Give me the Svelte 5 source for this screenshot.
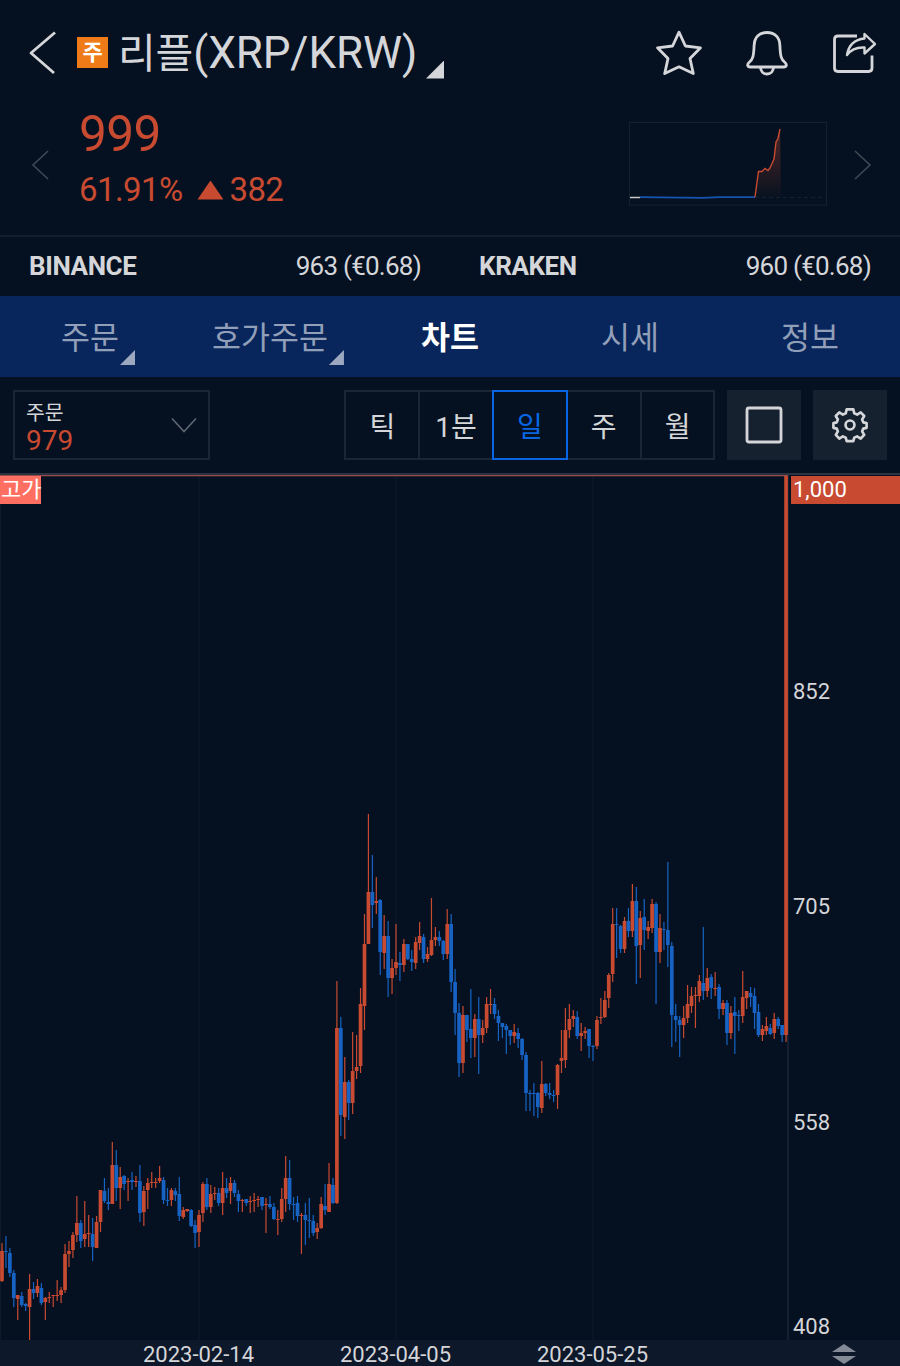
<script lang="ts">
	type Candle = [up: number, high: number, top: number, bottom: number, low: number];

	const exchanges = [
		{ name: 'BINANCE', price: '963 (€0.68)' },
		{ name: 'KRAKEN', price: '960 (€0.68)' }
	];

	const tabs = [
		{ label: '주문', menu: true },
		{ label: '호가주문', menu: true },
		{ label: '차트', menu: false },
		{ label: '시세', menu: false },
		{ label: '정보', menu: false }
	];

	const periods = ['틱', '1분', '일', '주', '월'];
	const dates = ['2023-02-14', '2023-04-05', '2023-05-25'];

	const prices = [
		{ label: '852', y: 699 },
		{ label: '705', y: 914 },
		{ label: '558', y: 1129.5 },
		{ label: '408', y: 1334 }
	];

	let tab = $state(2);
	let period = $state(2);

	const step = 3.94;

	// 1 = up (red), 0 = down (blue)
	const candles: Candle[] = [
		[1, 1243, 1251, 1281, 1282], [0, 1236, 1251, 1252, 1268], [0, 1248, 1253, 1273, 1277],
		[0, 1270, 1273, 1298, 1307], [1, 1295, 1295, 1299, 1320], [0, 1292, 1296, 1305, 1307],
		[0, 1303, 1304, 1306, 1311], [1, 1274, 1289, 1307, 1340], [0, 1282, 1289, 1293, 1299],
		[1, 1279, 1286, 1293, 1297], [0, 1283, 1288, 1303, 1305], [1, 1297, 1298, 1302, 1320],
		[1, 1292, 1297, 1298, 1303], [1, 1295, 1295, 1296, 1307], [1, 1280, 1295, 1296, 1301],
		[1, 1287, 1290, 1295, 1303], [1, 1244, 1254, 1290, 1293], [1, 1241, 1251, 1254, 1267],
		[1, 1232, 1235, 1250, 1258], [1, 1196, 1223, 1235, 1242], [0, 1220, 1223, 1241, 1248],
		[1, 1201, 1234, 1239, 1247], [1, 1215, 1233, 1234, 1247], [0, 1218, 1234, 1247, 1261],
		[1, 1216, 1222, 1248, 1248], [1, 1190, 1190, 1222, 1232], [0, 1178, 1191, 1201, 1203],
		[0, 1188, 1202, 1204, 1210], [1, 1142, 1165, 1204, 1204], [0, 1150, 1165, 1188, 1201],
		[1, 1167, 1177, 1188, 1209], [0, 1175, 1176, 1184, 1190], [1, 1178, 1181, 1182, 1201],
		[0, 1172, 1180, 1182, 1190], [1, 1176, 1181, 1182, 1187], [0, 1165, 1181, 1213, 1222],
		[1, 1186, 1191, 1212, 1226], [1, 1178, 1183, 1190, 1209], [1, 1172, 1182, 1183, 1188],
		[1, 1178, 1182, 1183, 1188], [1, 1166, 1178, 1181, 1183], [0, 1177, 1180, 1200, 1204],
		[0, 1188, 1200, 1201, 1206], [1, 1188, 1190, 1200, 1206], [0, 1188, 1191, 1195, 1201],
		[0, 1177, 1194, 1216, 1221], [1, 1207, 1210, 1217, 1219], [1, 1209, 1209, 1211, 1212],
		[0, 1209, 1210, 1226, 1227], [0, 1220, 1225, 1233, 1248], [1, 1210, 1215, 1232, 1247],
		[1, 1182, 1184, 1213, 1222], [0, 1178, 1184, 1207, 1210], [1, 1185, 1194, 1207, 1213],
		[1, 1187, 1193, 1194, 1200], [0, 1188, 1193, 1203, 1206], [1, 1172, 1188, 1203, 1215],
		[0, 1178, 1188, 1193, 1198], [1, 1177, 1183, 1191, 1204], [0, 1180, 1183, 1193, 1197],
		[0, 1190, 1194, 1201, 1212], [1, 1199, 1200, 1201, 1212], [0, 1199, 1199, 1203, 1206],
		[1, 1196, 1201, 1202, 1213], [1, 1193, 1200, 1201, 1212], [1, 1196, 1199, 1200, 1207],
		[0, 1197, 1197, 1206, 1210], [1, 1198, 1204, 1205, 1233], [0, 1196, 1204, 1207, 1209],
		[0, 1203, 1207, 1219, 1220], [1, 1210, 1219, 1220, 1235], [1, 1188, 1199, 1219, 1222],
		[1, 1156, 1178, 1199, 1212], [0, 1160, 1178, 1204, 1210], [0, 1197, 1204, 1205, 1220],
		[0, 1196, 1203, 1216, 1222], [1, 1213, 1215, 1216, 1254], [0, 1203, 1215, 1220, 1245],
		[0, 1198, 1220, 1221, 1238], [0, 1215, 1221, 1233, 1236], [1, 1223, 1228, 1232, 1239],
		[1, 1197, 1204, 1228, 1229], [0, 1184, 1206, 1210, 1215], [1, 1163, 1184, 1212, 1212],
		[0, 1178, 1185, 1203, 1204], [1, 981, 1028, 1203, 1204], [0, 1017, 1028, 1115, 1136],
		[1, 1057, 1082, 1117, 1139], [0, 1080, 1082, 1103, 1120], [1, 1032, 1071, 1103, 1114],
		[1, 1035, 1067, 1071, 1079], [1, 988, 1004, 1066, 1073], [1, 914, 944, 1006, 1030],
		[1, 814, 892, 944, 944], [0, 855, 892, 905, 928], [1, 877, 901, 903, 914],
		[0, 899, 900, 952, 975], [1, 915, 936, 953, 969], [0, 921, 936, 978, 997],
		[1, 959, 968, 978, 994], [1, 924, 962, 968, 975], [0, 952, 963, 965, 981],
		[1, 939, 944, 965, 972], [0, 944, 944, 959, 960], [0, 950, 959, 962, 971],
		[1, 937, 942, 963, 969], [1, 922, 936, 943, 950], [0, 934, 937, 959, 963],
		[1, 947, 954, 959, 962], [1, 898, 940, 955, 956], [1, 927, 937, 940, 946],
		[0, 931, 937, 941, 946], [0, 940, 941, 954, 960], [1, 909, 924, 954, 959],
		[0, 914, 924, 982, 992], [0, 969, 982, 1013, 1035], [0, 1003, 1013, 1063, 1077],
		[1, 1006, 1015, 1063, 1073], [0, 1015, 1015, 1030, 1042], [0, 989, 1029, 1038, 1058],
		[1, 1014, 1019, 1038, 1057], [0, 997, 1019, 1035, 1074], [1, 1020, 1028, 1035, 1043],
		[1, 997, 1004, 1028, 1033], [1, 989, 1004, 1005, 1014], [0, 998, 1004, 1014, 1019],
		[0, 1010, 1016, 1023, 1041], [0, 1023, 1023, 1027, 1038], [0, 1024, 1026, 1030, 1054],
		[0, 1030, 1030, 1036, 1045], [1, 1024, 1032, 1036, 1043], [0, 1028, 1033, 1039, 1048],
		[0, 1038, 1039, 1055, 1060], [0, 1052, 1055, 1093, 1111], [0, 1090, 1093, 1094, 1111],
		[0, 1083, 1093, 1094, 1116], [0, 1092, 1093, 1107, 1118], [1, 1061, 1084, 1108, 1113],
		[0, 1083, 1084, 1093, 1096], [0, 1083, 1093, 1095, 1099], [0, 1090, 1095, 1096, 1102],
		[1, 1064, 1065, 1095, 1109], [1, 1030, 1058, 1061, 1073], [1, 1008, 1030, 1060, 1068],
		[1, 1004, 1019, 1030, 1038], [1, 1010, 1016, 1019, 1027], [0, 1011, 1017, 1036, 1039],
		[1, 1023, 1033, 1036, 1051], [1, 1027, 1031, 1033, 1039], [0, 1029, 1029, 1046, 1058],
		[0, 1045, 1046, 1047, 1061], [1, 1016, 1020, 1046, 1049], [1, 998, 1017, 1018, 1024],
		[1, 991, 1000, 1017, 1018], [1, 973, 975, 998, 1008], [1, 908, 924, 974, 982],
		[0, 908, 924, 925, 958], [0, 925, 926, 949, 953], [1, 917, 921, 949, 953],
		[0, 908, 921, 931, 937], [1, 884, 901, 931, 937], [0, 887, 901, 946, 984],
		[1, 911, 918, 945, 978], [0, 899, 917, 930, 950], [1, 921, 927, 931, 939],
		[1, 899, 904, 928, 933], [0, 902, 904, 952, 1004], [1, 914, 928, 952, 963],
		[0, 922, 929, 930, 950], [0, 862, 930, 945, 967], [0, 942, 946, 1015, 1047],
		[0, 1004, 1016, 1020, 1042], [0, 1016, 1020, 1025, 1057], [1, 1006, 1018, 1025, 1038],
		[1, 985, 1004, 1018, 1023], [1, 987, 996, 1006, 1013], [1, 987, 995, 996, 1028],
		[1, 975, 981, 996, 1002], [0, 927, 983, 991, 1000], [1, 968, 978, 991, 997],
		[0, 974, 977, 988, 999], [1, 972, 988, 989, 996], [0, 984, 987, 1009, 1019],
		[1, 1000, 1003, 1009, 1015], [0, 1000, 1003, 1033, 1045], [1, 1006, 1013, 1033, 1039],
		[0, 997, 1012, 1016, 1054], [0, 1010, 1015, 1016, 1031], [1, 971, 997, 1016, 1023],
		[1, 991, 991, 998, 1009], [0, 987, 993, 997, 1007], [0, 988, 996, 1013, 1029],
		[0, 1004, 1012, 1035, 1037], [1, 1025, 1029, 1035, 1041], [1, 1017, 1026, 1031, 1035],
		[0, 1024, 1028, 1034, 1035], [1, 1013, 1019, 1033, 1039], [0, 1017, 1019, 1026, 1029],
		[0, 1025, 1025, 1035, 1042], [1, 476, 476, 1035, 1042]
	];
</script>

<div class="app">
	<header>
		<button class="back" aria-label="back">
			<svg width="30" height="46" viewBox="0 0 30 46">
				<path d="M27 2.5 3 23l23 20" />
			</svg>
		</button>
		<span class="badge">주</span>
		<h1><span>리플</span>(XRP/KRW)</h1>
		<i class="corner large"></i>
		<div class="actions">
			<svg width="48" height="48" viewBox="0 0 48 48">
				<path d="M24 3.200 30.400 17 45.500 18.800 35 29.500 38.300 44.600 24 37.800 9.700 44.600 13 29.500 2.500 18.800 17.600 17Z" />
			</svg>
			<svg width="44" height="48" viewBox="0 0 44 48">
				<path d="M22 3.500c-8 0-12.600 5-12.900 13C8.700 28 7.500 30.500 4.500 33c-3 2.500-2 5 .8 5h33.400c2.800 0 3.800-2.500.8-5-3-2.500-4.200-5-4.600-16.500C34.600 8.500 30 3.500 22 3.500Z" />
				<path d="M15.500 38c0 4 2.700 7 6.500 7s6.500-3 6.500-7" />
			</svg>
			<svg width="46" height="48" viewBox="0 0 46 48">
				<path d="M26 7H7Q3.500 7 3.500 10.500v28.500Q3.500 42.500 7 42.500h30.500q3.500 0 3.500-3.500V26.500" />
				<path class="thin" d="M16 26C17.500 17 23 10.500 33.500 9.500V5L44 15 33.500 24.500V18.500c-8-.5-13.500 2-17.500 7.500Z" />
			</svg>
		</div>
	</header>

	<section class="quote">
		<svg class="arrow" width="18" height="30" viewBox="0 0 18 30"><path d="M17 1 2 15l15 14" /></svg>
		<div class="price">
			<strong>999</strong>
			<div class="change">
				<span>61.91%</span>
				<i class="up"></i>
				<span>382</span>
			</div>
		</div>
		<svg class="spark" width="199" height="84" viewBox="0 0 199 84">
			<defs>
				<linearGradient id="glow" x1="0" y1="0" x2="0" y2="1">
					<stop offset="0" stop-color="#c84a31" stop-opacity=".38" />
					<stop offset="1" stop-color="#c84a31" stop-opacity=".02" />
				</linearGradient>
			</defs>
			<rect x=".5" y=".5" width="197" height="82.500" fill="none" stroke="#16212f" />
			<path d="M126 75.500H197" stroke="#16212f" stroke-dasharray="4 3" />
			<path d="M126 75 130 50 134 49 140 47 144 41 145 35 147 20 151 7 152 75Z" fill="url(#glow)" />
			<path d="M1 75.500H11" stroke="#c8c8c8" stroke-width="1.500" />
			<path d="M11 75.200 74 75.800 90 75.200H126" stroke="#1554b0" stroke-width="1.800" fill="none" />
			<path d="M126 75 129.500 49.500 133 49.500 136 46.500 139 48.500 141 46 145 37 147 20 149 16.500 151 7" fill="none" stroke="#c84a31" stroke-width="1.400" />
		</svg>
		<svg class="arrow" width="18" height="30" viewBox="0 0 18 30"><path d="M1 1l15 14L1 29" /></svg>
	</section>

	<section class="exchanges">
		{#each exchanges as exchange}
			<div class="exchange">
				<b>{exchange.name}</b>
				<span>{exchange.price}</span>
			</div>
		{/each}
	</section>

	<nav>
		{#each tabs as item, i}
			<button class:active={tab === i} onclick={() => (tab = i)}>
				<span class="label">
					{item.label}
					{#if item.menu}<i class="corner"></i>{/if}
				</span>
			</button>
		{/each}
	</nav>

	<section class="toolbar">
		<button class="order">
			<span>
				<small>주문</small>
				<em>979</em>
			</span>
			<svg width="26" height="16" viewBox="0 0 26 16"><path d="M1 1.500 13 14.500 25 1.500" /></svg>
		</button>
		<div class="periods">
			{#each periods as label, i}
				<button class:active={period === i} onclick={() => (period = i)}>{label}</button>
			{/each}
		</div>
		<button class="tool" aria-label="fullscreen">
			<svg width="38" height="38" viewBox="0 0 38 38"><rect x="2" y="2" width="34" height="34" rx="2" /></svg>
		</button>
		<button class="tool" aria-label="settings">
			<svg width="36" height="36" viewBox="0 0 38 38">
				<path d="M15.500 2.500h7l1 4.200 3 1.300 3.800-2.300 3.700 3.800-2.200 3.700 1.200 3 3.500.8v5l-3.500.8-1.200 3 2.200 3.700-3.700 3.800-3.800-2.300-3 1.300-1 3.700h-7l-1-3.700-3-1.300-3.800 2.300L4 29.500l2.200-3.700-1.200-3L1.500 22v-5l3.500-.8 1.200-3L4 9.500l3.700-3.800L11.500 8l3-1.300Z" />
				<circle cx="19" cy="19" r="4.700" />
			</svg>
		</button>
	</section>

	<svg class="chart" width="900" height="867" viewBox="0 473 900 867">
		<rect x="0" y="473" width="900" height="2" fill="#2b3340" />
		{#each [0.5, 199, 396, 593] as x}
			<rect x={x - 0.5} y="476" width="1" height="864" fill="#0f1b2a" />
		{/each}
		<rect x="787.500" y="475" width="1" height="865" fill="#263040" />
		<rect x="0" y="475" width="788" height="1.300" fill="#98494a" />
		{#each candles as [up, high, top, bottom, low], i}
			{@const x = 2 + i * step}
			<g fill={up ? '#c84a31' : '#1763c4'}>
				<rect x={x - 0.6} y={high} width="1.2" height={low - high} />
				<rect x={x - 1.85} y={top} width="3.7" height={bottom - top} />
			</g>
		{/each}
		<rect x="0" y="476" width="41" height="28" fill="#ff6f61" />
		<text class="high" x="1" y="496.500">고가</text>
		<rect x="791" y="476" width="109" height="28" fill="#c84a31" />
		<text class="high" x="793" y="497">1,000</text>
		{#each prices as price}
			<text x="793" y={price.y}>{price.label}</text>
		{/each}
	</svg>

	<footer>
		{#each dates as date}
			<time>{date}</time>
		{/each}
		<svg width="24" height="20" viewBox="0 0 24 20"><path d="M12 0 24 8H0ZM0 12H24L12 20Z" /></svg>
	</footer>
</div>

<style>
	:global(body) {
		background: #051120;
	}

	.app {
		width: 900px;
		height: 1366px;
		overflow: hidden;
		display: flex;
		flex-direction: column;
		background: #051120;
		color: #d5d6d9;
		font-family: Roboto, 'Noto Sans CJK KR', sans-serif;
	}

	* {
		box-sizing: border-box;
	}

	button {
		padding: 0;
		border: none;
		background: none;
		color: inherit;
		font: inherit;
	}

	svg {
		display: block;
		flex: none;
	}

	header {
		height: 105px;
		display: flex;
		align-items: center;
		padding: 0 23px 0 28px;
	}

	.back path,
	.actions path {
		fill: none;
		stroke: #d5d6d9;
		stroke-width: 2.8;
		stroke-linejoin: round;
	}

	.actions .thin {
		stroke-width: 2.4;
	}

	.badge {
		width: 31px;
		height: 31px;
		margin-left: 19px;
		background: #ee7b18;
		color: #fff;
		font-size: 22px;
		font-weight: 700;
		line-height: 31px;
		text-align: center;
	}

	h1 {
		width: 299px;
		margin: 2px 0 0 10px;
		font-size: 44px;
		font-weight: 400;
		letter-spacing: -0.1px;
		line-height: 60px;
		white-space: nowrap;
	}

	h1 span {
		font-size: 41px;
	}

	.corner {
		width: 15px;
		height: 15px;
		background: #9ca8bf;
		clip-path: polygon(100% 0, 100% 100%, 0 100%);
	}

	.corner.large {
		width: 18px;
		height: 18px;
		margin: 34px 0 0 9px;
		background: #d5d6d9;
	}

	.actions {
		display: flex;
		gap: 42px;
		margin-left: auto;
	}

	.quote {
		height: 130px;
		display: flex;
		padding: 0 28px 0 31px;
	}

	.arrow {
		margin-top: 45px;
		fill: none;
		stroke: #3f4955;
		stroke-width: 1.6;
	}

	.price {
		margin-left: 30px;
		color: #c84a31;
	}

	.price strong {
		display: block;
		font-size: 49.5px;
		font-weight: 400;
		letter-spacing: -0.6px;
		line-height: 59px;
	}

	.change {
		display: flex;
		align-items: center;
		font-size: 33px;
		letter-spacing: -0.6px;
		line-height: 52px;
	}

	.up {
		width: 26px;
		height: 19px;
		margin: 0 6px 0 15px;
		background: #c84a31;
		clip-path: polygon(50% 0, 100% 100%, 0 100%);
	}

	.spark {
		margin: 17px 26px 0 auto;
	}

	.exchanges {
		height: 61px;
		display: flex;
		border-top: 2px solid #131e2c;
	}

	.exchange {
		flex: 1;
		display: flex;
		justify-content: space-between;
		align-items: center;
		padding: 0 29px 2px;
		font-size: 26px;
	}

	.exchange b {
		letter-spacing: -0.4px;
	}

	.exchange span {
		letter-spacing: -0.75px;
	}

	nav {
		height: 81px;
		display: flex;
		background: #08265c;
	}

	nav button {
		flex: 1;
		color: #929fb8;
		font-size: 31.5px;
		line-height: 85px;
	}

	nav .active {
		color: #fff;
		font-weight: 700;
	}

	.label {
		position: relative;
	}

	.label .corner {
		position: absolute;
		right: -16px;
		bottom: -8px;
	}

	.toolbar {
		height: 96px;
		display: flex;
		padding: 13px 13px 0;
	}

	.order {
		width: 197px;
		height: 70px;
		display: flex;
		justify-content: space-between;
		align-items: center;
		padding: 3px 11px 0 11px;
		border: 2px solid #1b2635;
		text-align: left;
	}

	.order small,
	.order em {
		display: block;
		font-size: 20.5px;
		font-style: normal;
		line-height: 27px;
	}

	.order em {
		color: #c84a31;
		font-size: 28px;
	}

	.order svg {
		margin-bottom: 4px;
		fill: none;
		stroke: #5d6671;
		stroke-width: 1.6;
	}

	.periods {
		display: flex;
		height: 70px;
		margin-left: auto;
	}

	.periods button {
		position: relative;
		width: 75.8px;
		margin-left: -2px;
		border: 2px solid #1b2635;
		font-size: 28px;
	}

	.periods .active {
		z-index: 1;
		border-color: #0866e4;
		color: #0866e4;
	}

	.tool {
		width: 74.5px;
		height: 70px;
		display: flex;
		justify-content: center;
		align-items: center;
		margin-left: 11.3px;
		background: #162130;
	}

	.tool svg {
		fill: none;
		stroke: #d5d6d9;
		stroke-width: 2.8;
		stroke-linejoin: round;
	}

	.chart text {
		fill: #d5d6d9;
		font-size: 22px;
	}

	.chart .high {
		fill: #fff;
	}

	footer {
		height: 26px;
		display: flex;
		align-items: center;
		padding-left: 100px;
		background: #0d182a;
	}

	time {
		width: 197px;
		padding-top: 3px;
		font-size: 22px;
		line-height: 26px;
		text-align: center;
	}

	footer svg {
		margin: 2px 0 0 141px;
		fill: #858b96;
	}
</style>
